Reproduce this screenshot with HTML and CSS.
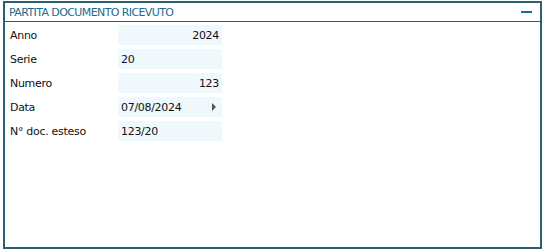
FILE: index.html
```html
<!DOCTYPE html>
<html lang="it">
  <head>
    <meta charset="UTF-8" />
    <title>Partita documento ricevuto</title>
    <link rel="stylesheet" href="styles.css">
  </head>
  <body>
    <div class="panel">
      <div class="panel-head">
        <span class="panel-title">PARTITA DOCUMENTO RICEVUTO</span>
        <span class="collapse"></span>
      </div>
      <div class="panel-body">
        <div class="row">
          <label>Anno</label>
          <div class="field num">2024</div>
        </div>
        <div class="row">
          <label>Serie</label>
          <div class="field">20</div>
        </div>
        <div class="row">
          <label>Numero</label>
          <div class="field num">123</div>
        </div>
        <div class="row">
          <label>Data</label>
          <div class="field date">07/08/2024<span class="arrow"></span></div>
        </div>
        <div class="row">
          <label>N° doc. esteso</label>
          <div class="field">123/20</div>
        </div>
      </div>
    </div>
  </body>
</html>
```

FILE: styles.css
```css
* {
  margin: 0;
  padding: 0;
  box-sizing: border-box;
}
html,
body {
  width: 100%;
  height: 100%;
  background: #fff;
  overflow: hidden;
}
body {
  padding: 1px 3px 2px 3px;
  font-family: "DejaVu Sans", Tahoma, sans-serif;
  font-size: 11px;
  color: #111;
}
.panel {
  height: 248px;
  border: 2px solid #2b6073;
  display: flex;
  flex-direction: column;
}
.panel-head {
  height: 19px;
  border-bottom: 1px solid #2b6073;
  display: flex;
  align-items: center;
  justify-content: space-between;
  padding: 0 8px 0 4px;
}
.panel-title {
  color: #1d6a8c;
  font-size: 11px;
  letter-spacing: -0.6px;
}
.collapse {
  width: 11px;
  height: 2px;
  background: #1d6a8c;
}
.panel-body {
  padding: 3px 0 0 5px;
  display: flex;
  flex-direction: column;
  gap: 4px;
}
.row {
  display: flex;
  align-items: center;
  height: 20px;
}
.row label {
  width: 108px;
  letter-spacing: -0.3px;
}
.field {
  width: 104px;
  height: 20px;
  background: #eff8fd;
  display: flex;
  align-items: center;
  padding: 0 3px;
  letter-spacing: -0.3px;
}
.field.num {
  justify-content: flex-end;
}
.field.date {
  justify-content: space-between;
  padding-right: 6px;
}
.arrow {
  width: 0;
  height: 0;
  border-left: 4px solid #555;
  border-top: 4px solid transparent;
  border-bottom: 4px solid transparent;
}
```
